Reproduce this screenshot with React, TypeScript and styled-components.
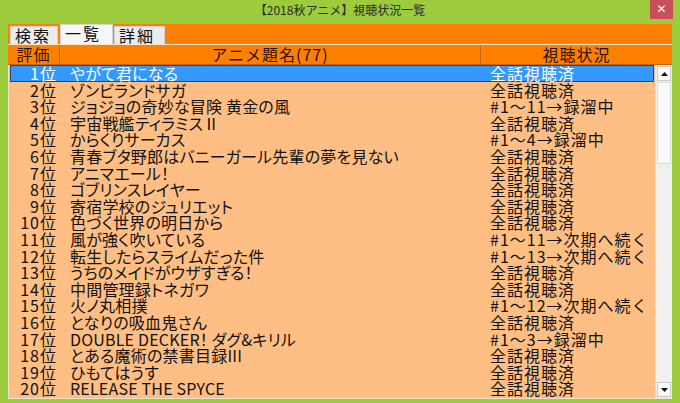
import React from "react";
import styled, { createGlobalStyle } from "styled-components";

const GlobalStyle = createGlobalStyle`
  html, body {
    margin: 0;
    padding: 0;
  }
  body {
    width: 680px;
    height: 403px;
    overflow: hidden;
    background: #9ccb3d;
    font-family: "Noto Sans CJK JP", "Noto Sans", sans-serif;
  }
`;

const Window = styled.div`
  width: 680px;
  height: 403px;
  display: flex;
  flex-direction: column;
  background: #9ccb3d;
`;

const TitleBar = styled.div`
  height: 24px;
  display: grid;
  grid-template-columns: 1fr auto 1fr;
  align-items: start;
`;

const Title = styled.div`
  font-size: 12px;
  line-height: 20px;
  color: #2b2b2b;
`;

const CloseButton = styled.div`
  justify-self: end;
  width: 23px;
  height: 19px;
  margin-right: 7px;
  background: #c7505a;
  color: #fff;
  font-family: "DejaVu Sans", sans-serif;
  font-size: 12px;
  font-weight: bold;
  line-height: 18px;
  text-align: center;
`;

const Content = styled.div`
  flex: 1;
  display: flex;
  flex-direction: column;
  padding: 0 8px 4px 8px;
  min-height: 0;
`;

const TabBar = styled.div`
  height: 20px;
  background: #ff8000;
  display: flex;
  align-items: flex-end;
  gap: 1px;
  padding-left: 2px;
  border-bottom: 1px solid #fbe6d0;
`;

const Tab = styled.div<{ $active?: boolean; $w: number }>`
  width: ${(p) => p.$w}px;
  height: ${(p) => (p.$active ? 20 : 18)}px;
  box-sizing: border-box;
  background: ${(p) => (p.$active ? "#f6f6f6" : "#ececec")};
  border: 1px solid #d4d4d4;
  border-bottom: none;
  font-size: 16px;
  line-height: 17px;
  letter-spacing: 2px;
  color: #111;
  padding-left: 4px;
  margin-right: ${(p) => (p.$active ? 0 : 1)}px;
`;

const cols = "52px 421px 1fr";

const Header = styled.div`
  height: 20px;
  display: grid;
  grid-template-columns: ${cols};
  background: #ff8000;
  box-sizing: border-box;
  border-bottom: 1px solid #c86400;
`;

const HeaderCell = styled.div`
  font-size: 16px;
  line-height: 19px;
  letter-spacing: 1px;
  text-align: center;
  color: #2a1400;
  border-right: 1px solid #c86400;
  &:last-child {
    border-right: none;
  }
`;

const ListArea = styled.div`
  flex: 1;
  display: flex;
  background: #ffbe84;
  border-left: 1px solid #f3e2d0;
  border-bottom: 1px solid #f3e2d0;
  min-height: 0;
`;

const Rows = styled.div`
  flex: 1;
  display: flex;
  flex-direction: column;
  margin-left: -1px;
`;

const Row = styled.div<{ $selected?: boolean }>`
  position: relative;
  height: 16.6px;
  display: grid;
  grid-template-columns: ${cols};
  font-size: 16px;
  line-height: 16.6px;
  color: ${(p) => (p.$selected ? "#fff" : "#111")};
  white-space: nowrap;

  &::before {
    content: "";
    display: ${(p) => (p.$selected ? "block" : "none")};
    position: absolute;
    top: 0;
    bottom: 0;
    left: 2px;
    right: 1px;
    background: #3399ff;
    box-shadow: inset 0 0 0 1px #2a4766;
  }
`;

const Cell = styled.div<{ $kind: "rank" | "title" | "status" }>`
  position: relative;
  text-align: ${(p) => (p.$kind === "rank" ? "right" : "left")};
  padding-right: ${(p) => (p.$kind === "rank" ? 3 : 0)}px;
  padding-left: ${(p) => (p.$kind === "title" ? 10 : p.$kind === "status" ? 9 : 0)}px;
  letter-spacing: ${(p) => (p.$kind === "title" ? 0.2 : 1)}px;
  font-feature-settings: ${(p) => (p.$kind === "title" ? '"palt"' : "normal")};
`;

const ScrollBar = styled.div`
  width: 17px;
  display: flex;
  flex-direction: column;
  background: #f0f0f0;
  border-left: 1px solid #e2e2e2;
  box-sizing: border-box;
`;

const ScrollButton = styled.div<{ $bottom?: boolean }>`
  height: 15px;
  margin: 1px 1px ${(p) => (p.$bottom ? 1 : 0)}px 1px;
  box-sizing: border-box;
  background: #fafafa;
  border: 1px solid #c8c8c8;
  display: flex;
  align-items: center;
  justify-content: center;
`;

const Thumb = styled.div`
  height: 80px;
  margin: 1px 1px 0 1px;
  background: #f9f9f9;
  border: 1px solid #dcdcdc;
`;

const Track = styled.div`
  flex: 1;
`;

const Arrow = ({ down }: { down?: boolean }) => (
  <svg width="7" height="4" viewBox="0 0 7 4">
    <path d={down ? "M0 0 H7 L3.5 4 Z" : "M0 4 H7 L3.5 0 Z"} fill="#111" />
  </svg>
);

type Entry = { title: string; status: string };

const entries: Entry[] = [
  { title: "やがて君になる", status: "全話視聴済" },
  { title: "ゾンビランドサガ", status: "全話視聴済" },
  { title: "ジョジョの奇妙な冒険 黄金の風", status: "#1～11→録溜中" },
  { title: "宇宙戦艦ティラミスⅡ", status: "全話視聴済" },
  { title: "からくりサーカス", status: "#1～4→録溜中" },
  { title: "青春ブタ野郎はバニーガール先輩の夢を見ない", status: "全話視聴済" },
  { title: "アニマエール！", status: "全話視聴済" },
  { title: "ゴブリンスレイヤー", status: "全話視聴済" },
  { title: "寄宿学校のジュリエット", status: "全話視聴済" },
  { title: "色づく世界の明日から", status: "全話視聴済" },
  { title: "風が強く吹いている", status: "#1～11→次期へ続く" },
  { title: "転生したらスライムだった件", status: "#1～13→次期へ続く" },
  { title: "うちのメイドがウザすぎる！", status: "全話視聴済" },
  { title: "中間管理録トネガワ", status: "全話視聴済" },
  { title: "火ノ丸相撲", status: "#1～12→次期へ続く" },
  { title: "となりの吸血鬼さん", status: "全話視聴済" },
  { title: "DOUBLE DECKER！ ダグ&キリル", status: "#1～3→録溜中" },
  { title: "とある魔術の禁書目録III", status: "全話視聴済" },
  { title: "ひもてはうす", status: "全話視聴済" },
  { title: "RELEASE THE SPYCE", status: "全話視聴済" },
];

export default function App() {
  return (
    <>
      <GlobalStyle />
      <Window>
        <TitleBar>
          <div />
          <Title>【2018秋アニメ】視聴状況一覧</Title>
          <CloseButton>✕</CloseButton>
        </TitleBar>
        <Content>
          <TabBar>
            <Tab $w={48}>検索</Tab>
            <Tab $w={53} $active>
              一覧
            </Tab>
            <Tab $w={51}>詳細</Tab>
          </TabBar>
          <Header>
            <HeaderCell>評価</HeaderCell>
            <HeaderCell>アニメ題名(77)</HeaderCell>
            <HeaderCell>視聴状況</HeaderCell>
          </Header>
          <ListArea>
            <Rows>
              {entries.map((e, i) => (
                <Row key={i} $selected={i === 0}>
                  <Cell $kind="rank">{i + 1}位</Cell>
                  <Cell $kind="title">{e.title}</Cell>
                  <Cell $kind="status">{e.status}</Cell>
                </Row>
              ))}
            </Rows>
            <ScrollBar>
              <ScrollButton>
                <Arrow />
              </ScrollButton>
              <Thumb />
              <Track />
              <ScrollButton $bottom>
                <Arrow down />
              </ScrollButton>
            </ScrollBar>
          </ListArea>
        </Content>
      </Window>
    </>
  );
}
